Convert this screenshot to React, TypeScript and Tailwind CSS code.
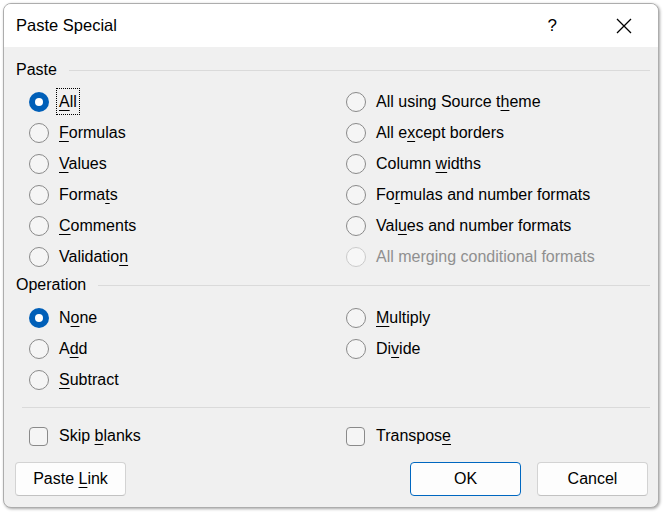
import type { ReactNode } from "react"

type Item = { label: string; key: number; checked?: boolean; disabled?: boolean; focus?: boolean }

function Label({ label, k }: { label: string; k: number }) {
  return (
    <>
      {label.slice(0, k)}
      <span className="underline underline-offset-[3px] decoration-1">{label[k]}</span>
      {label.slice(k + 1)}
    </>
  )
}

function Radio({ label, checked, disabled, focus, k }: Item & { k: number }) {
  return (
    <div className="flex items-center h-[31px]">
      {checked ? (
        <span className="w-5 h-5 rounded-full bg-[#005fb8] flex items-center justify-center shrink-0">
          <span className="w-2 h-2 rounded-full bg-white" />
        </span>
      ) : disabled ? (
        <span className="w-5 h-5 rounded-full border border-[#cbcbcb] bg-[#f7f7f7] shrink-0" />
      ) : (
        <span className="w-5 h-5 rounded-full border border-[#8a8a8a] bg-[#f5f5f5] shrink-0" />
      )}
      <span
        className={
          "leading-[25px] " +
          (disabled ? "text-[#8f8f8f] ml-[10px] " : "text-black ") +
          (focus ? "ml-[8px] px-[2px] outline outline-1 outline-dotted outline-black" : disabled ? "" : "ml-[10px]")
        }
      >
        {disabled ? label : <Label label={label} k={k} />}
      </span>
    </div>
  )
}

function Section({ title }: { title: string }) {
  return (
    <div className="flex items-center h-6">
      <span className="text-black">{title}</span>
      <span className="flex-1 h-px bg-[#dadada] ml-[12px]" />
    </div>
  )
}

function Check({ label, k }: { label: string; k: number }) {
  return (
    <div className="flex items-center h-[30px]">
      <span className="w-[19px] h-[19px] rounded-[4px] border border-[#8a8a8a] bg-[#f5f5f5] shrink-0" />
      <span className="ml-[11px]">
        <Label label={label} k={k} />
      </span>
    </div>
  )
}

function Button({ children, primary, className }: { children: ReactNode; primary?: boolean; className?: string }) {
  return (
    <button
      className={
        "h-[34px] w-[111px] rounded-[4px] bg-[#fdfdfd] text-black flex items-center justify-center " +
        (primary ? "border border-[#0067c0] " : "border border-[#d3d3d3] border-b-[#c2c2c2] ") +
        (className ?? "")
      }
    >
      {children}
    </button>
  )
}

const pasteLeft: Item[] = [
  { label: "All", key: 0, checked: true, focus: true },
  { label: "Formulas", key: 0 },
  { label: "Values", key: 0 },
  { label: "Formats", key: 5 },
  { label: "Comments", key: 0 },
  { label: "Validation", key: 9 },
]

const pasteRight: Item[] = [
  { label: "All using Source theme", key: 18 },
  { label: "All except borders", key: 5 },
  { label: "Column widths", key: 7 },
  { label: "Formulas and number formats", key: 2 },
  { label: "Values and number formats", key: 3 },
  { label: "All merging conditional formats", key: 0, disabled: true },
]

const opLeft: Item[] = [
  { label: "None", key: 1, checked: true },
  { label: "Add", key: 1 },
  { label: "Subtract", key: 0 },
]

const opRight: Item[] = [
  { label: "Multiply", key: 0 },
  { label: "Divide", key: 2 },
]

export default function App() {
  return (
    <div
      className="w-[663px] h-[513px] bg-white p-[3px] text-[16px]"
      style={{ fontFamily: '"Liberation Sans", Arial, sans-serif' }}
    >
      <div className="w-[656px] h-[505px] rounded-[8px] border border-[#adadad] shadow-[1px_1px_3px_rgba(0,0,0,0.35)] overflow-hidden bg-[#f0f0f0] flex flex-col">
        <div className="h-[43px] bg-white flex items-center pl-[12px] shrink-0">
          <span className="text-[16.5px] text-black flex-1">Paste Special</span>
          <span className="text-[17px] text-black mr-[59px]">?</span>
          <svg width="16" height="16" viewBox="0 0 16 16" className="mr-[26px]">
            <path d="M1 1 L15 15 M15 1 L1 15" stroke="#000" strokeWidth="1.3" />
          </svg>
        </div>

        <div className="flex-1 flex flex-col pl-[12px] pr-[8px] pt-[11px]">
          <Section title="Paste" />
          <div className="grid grid-cols-[316px_1fr] pl-[13px] mt-[4px]">
            <div>
              {pasteLeft.map((it) => (
                <Radio key={it.label} {...it} k={it.key} />
              ))}
            </div>
            <div className="pl-px">
              {pasteRight.map((it) => (
                <Radio key={it.label} {...it} k={it.key} />
              ))}
            </div>
          </div>

          <div className="mt-[1px]">
            <Section title="Operation" />
          </div>
          <div className="grid grid-cols-[316px_1fr] pl-[13px] mt-[5px]">
            <div>
              {opLeft.map((it) => (
                <Radio key={it.label} {...it} k={it.key} />
              ))}
            </div>
            <div className="pl-px">
              {opRight.map((it) => (
                <Radio key={it.label} {...it} k={it.key} />
              ))}
            </div>
          </div>

          <div className="h-px bg-[#dadada] ml-[6px] mt-[12px]" />

          <div className="grid grid-cols-[316px_1fr] pl-[13px] mt-[13px]">
            <Check label="Skip blanks" k={5} />
            <div className="pl-px">
              <Check label="Transpose" k={8} />
            </div>
          </div>

          <div className="flex items-center mt-[11px] -ml-px">
            <Button className="w-[110px]">
              <span>
                Paste <Label label="Link" k={0} />
              </span>
            </Button>
            <div className="flex-1" />
            <Button primary>OK</Button>
            <Button className="ml-[16px] mr-[2px]">Cancel</Button>
          </div>
        </div>
      </div>
    </div>
  )
}
